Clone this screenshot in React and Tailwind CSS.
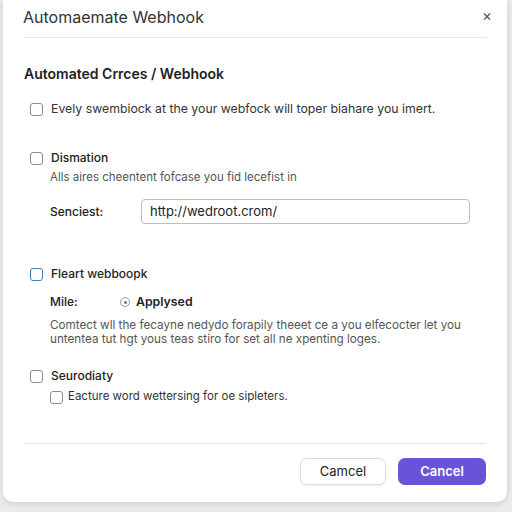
import React from "react";

function Box({ blue }) {
  return (
    <span
      className={
        "inline-block w-[13px] h-[13px] rounded-[3px] border-[1.5px] bg-white shrink-0 " +
        (blue ? "border-[#3f7fb3]" : "border-[#8d8d8d]")
      }
    />
  );
}

export default function App() {
  return (
    <div
      className="w-[512px] h-[512px] bg-[#ebebeb] pl-[3px] pr-[5px] text-[#222]"
      style={{ fontFamily: "Inter, 'Noto Sans', sans-serif" }}
    >
      <div className="h-[502px] bg-white rounded-b-[10px] shadow-[0_2px_6px_rgba(0,0,0,0.12)] px-[21px] flex flex-col">
        <div className="h-[38px] flex items-center justify-between border-b border-[#e6e6e6]">
          <span className="text-[16px] text-[#333] -ml-[1px] -mt-[4px]">Automaemate Webhook</span>
          <span className="text-[15px] text-[#555] -mr-[6px] -mt-[4px]">×</span>
        </div>
        <div className="mt-[26px] text-[14px] font-semibold leading-[20px]">Automated Crrces / Webhook</div>

        <div className="mt-[15px] flex items-center gap-[8px] pl-[6px] h-[20px]">
          <Box />
          <span className="text-[12.3px] text-[#333]">Evely swembiock at the your webfock will toper biahare you imert.</span>
        </div>

        <div className="mt-[29px] flex items-center gap-[8px] pl-[6px] h-[20px]">
          <Box />
          <span className="text-[12px] font-medium">Dismation</span>
        </div>
        <div className="pl-[26px] h-[20px] flex items-center text-[11.5px] text-[#555]">
          Alls aires cheentent fofcase you fid lecefist in
        </div>
        <div className="mt-[11px] pl-[26px] flex items-center h-[25px]">
          <span className="w-[91px] text-[12px] font-medium">Senciest:</span>
          <div className="flex-1 mr-[16px] h-[25px] border border-[#bdbdbd] rounded-[4px] flex items-center px-[8px] text-[13px]">
            http://wedroot.crom/
          </div>
        </div>

        <div className="mt-[40px] flex items-center gap-[8px] pl-[6px] h-[20px]">
          <Box blue />
          <span className="text-[12px] font-medium">Fleart webboopk</span>
        </div>
        <div className="mt-[8px] pl-[26px] flex items-center h-[20px]">
          <span className="w-[70px] text-[12px] font-medium">Mile:</span>
          <span className="w-[10px] h-[10px] rounded-full border border-[#999] flex items-center justify-center">
            <span className="w-[3px] h-[3px] rounded-full bg-[#777]" />
          </span>
          <span className="ml-[6px] text-[12.3px] font-semibold">Applysed</span>
        </div>
        <div className="mt-[6px] pl-[26px] text-[11.7px] leading-[14px] text-[#555]">
          Comtect wll the fecayne nedydo forapily theeet ce a you elfecocter let you
          <br />
          untentea tut hgt yous teas stiro for set all ne xpenting loges.
        </div>

        <div className="mt-[20px] flex items-center gap-[8px] pl-[6px] h-[20px]">
          <Box />
          <span className="text-[12px] font-medium">Seurodiaty</span>
        </div>
        <div className="mt-[1px] flex items-center gap-[5px] pl-[26px] h-[20px]">
          <Box />
          <span className="text-[11.5px] text-[#333]">Eacture word wettersing for oe sipleters.</span>
        </div>

        <div className="mt-[36px] border-t border-[#e6e6e6]" />
        <div className="mt-[14px] flex justify-end gap-[12px]">
          <button className="w-[86px] h-[27px] rounded-[7px] border border-[#dcdcdc] bg-white text-[13px] shadow-[0_1px_2px_rgba(0,0,0,0.08)]">
            Camcel
          </button>
          <button className="w-[88px] h-[27px] rounded-[7px] bg-[#6953d8] text-white text-[13px] font-semibold">
            Cancel
          </button>
        </div>
      </div>
    </div>
  );
}
